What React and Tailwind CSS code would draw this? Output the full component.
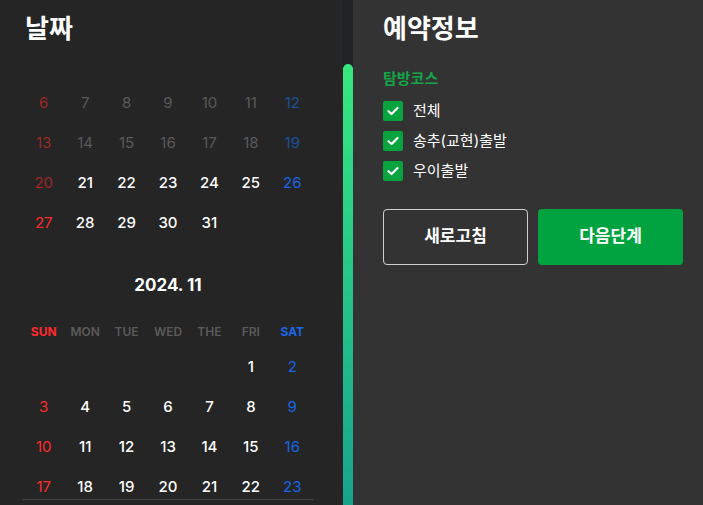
import React from "react";

const FONT = { fontFamily: 'Inter, "Noto Sans CJK KR", sans-serif' };

// tone: d = dim gray, dr = dim red, db = dim blue, w = white, r = red, b = blue
const TONE = {
  d: "text-[#5a5a5a] font-normal",
  dr: "text-[#9c2828] font-normal",
  db: "text-[#1b4f9c] font-normal",
  w: "text-white font-medium",
  r: "text-[#ff2b2b] font-normal",
  b: "text-[#1766e6] font-normal",
};

const OCT = [
  [["6", "dr"], ["7", "d"], ["8", "d"], ["9", "d"], ["10", "d"], ["11", "d"], ["12", "db"]],
  [["13", "dr"], ["14", "d"], ["15", "d"], ["16", "d"], ["17", "d"], ["18", "d"], ["19", "db"]],
  [["20", "dr"], ["21", "w"], ["22", "w"], ["23", "w"], ["24", "w"], ["25", "w"], ["26", "b"]],
  [["27", "r"], ["28", "w"], ["29", "w"], ["30", "w"], ["31", "w"], null, null],
];

const NOV = [
  [null, null, null, null, null, ["1", "w"], ["2", "b"]],
  [["3", "r"], ["4", "w"], ["5", "w"], ["6", "w"], ["7", "w"], ["8", "w"], ["9", "b"]],
  [["10", "r"], ["11", "w"], ["12", "w"], ["13", "w"], ["14", "w"], ["15", "w"], ["16", "b"]],
  [["17", "r"], ["18", "w"], ["19", "w"], ["20", "w"], ["21", "w"], ["22", "w"], ["23", "b"]],
];

const WEEK = [
  ["SUN", "text-[#ff2b2b] font-bold"],
  ["MON", "text-[#5a5a5a] font-semibold"],
  ["TUE", "text-[#5a5a5a] font-semibold"],
  ["WED", "text-[#5a5a5a] font-semibold"],
  ["THE", "text-[#5a5a5a] font-semibold"],
  ["FRI", "text-[#5a5a5a] font-semibold"],
  ["SAT", "text-[#1766e6] font-bold"],
];

function DateRow({ days }) {
  return (
    <div className="grid grid-cols-7 h-10 items-center">
      {days.map((d, i) => (
        <div key={i} className={"text-center text-[15px] " + (d ? TONE[d[1]] : "")}>
          {d ? d[0] : ""}
        </div>
      ))}
    </div>
  );
}

function CheckItem({ label }) {
  return (
    <div className="flex items-center gap-[10px] h-[30px]">
      <div className="w-5 h-5 rounded-[2px] bg-[#07a33e] flex items-center justify-center">
        <svg width="12" height="10" viewBox="0 0 12 10" fill="none">
          <path d="M1.5 5.2 L4.6 8 L10.5 2" stroke="#fff" strokeWidth="2.2" strokeLinecap="round" strokeLinejoin="round" />
        </svg>
      </div>
      <span className="text-[15px] text-white">{label}</span>
    </div>
  );
}

export default function App() {
  return (
    <div className="w-[703px] h-[505px] flex overflow-hidden bg-[#252525]" style={FONT}>
      {/* date column */}
      <div className="w-[343px] shrink-0 px-[23px] bg-[#252525]">
        <div className="h-[58px] flex items-center pl-[2px] pb-[2px]">
          <h1 className="text-[26px] font-bold text-white">날짜</h1>
        </div>
        <div className="w-[290px] pt-[25px]">
          {OCT.map((r, i) => <DateRow key={i} days={r} />)}
          <div className="pt-[30px] pb-[19px] h-[74px] text-center text-[17px] font-bold text-white leading-[24px]">2024. 11</div>
          <div className="grid grid-cols-7 h-[30px] items-center">
            {WEEK.map(([w, c]) => (
              <div key={w} className={"text-center text-[12px] " + c}>{w}</div>
            ))}
          </div>
          {NOV.map((r, i) => <DateRow key={i} days={r} />)}
          <div className="-mt-[8px] h-px bg-[#474747]" />
        </div>
      </div>

      {/* scrollbar */}
      <div className="w-[10px] shrink-0 bg-[#212223] pt-[64px]">
        <div className="h-[460px] rounded-t-full bg-gradient-to-b from-[#36e87f] to-[#17a08c]" />
      </div>

      {/* booking info */}
      <div className="flex-1 bg-[#333333] pl-[30px] pr-[20px]">
        <div className="h-[58px] flex items-center pb-[2px]">
          <h2 className="text-[26px] font-bold text-white">예약정보</h2>
        </div>
        <div className="pt-[11px] text-[15px] font-bold text-[#13a548] leading-5">탐방코스</div>
        <div className="pt-[7px]">
          <CheckItem label="전체" />
          <CheckItem label="송추(교현)출발" />
          <CheckItem label="우이출발" />
        </div>
        <div className="flex gap-[10px] pt-[23px]">
          <button className="w-[145px] h-[56px] rounded-[4px] border border-[#d0d0d0] text-white text-[17px] font-bold">새로고침</button>
          <button className="w-[145px] h-[56px] rounded-[4px] bg-[#00a340] text-white text-[17px] font-bold">다음단계</button>
        </div>
      </div>
    </div>
  );
}
